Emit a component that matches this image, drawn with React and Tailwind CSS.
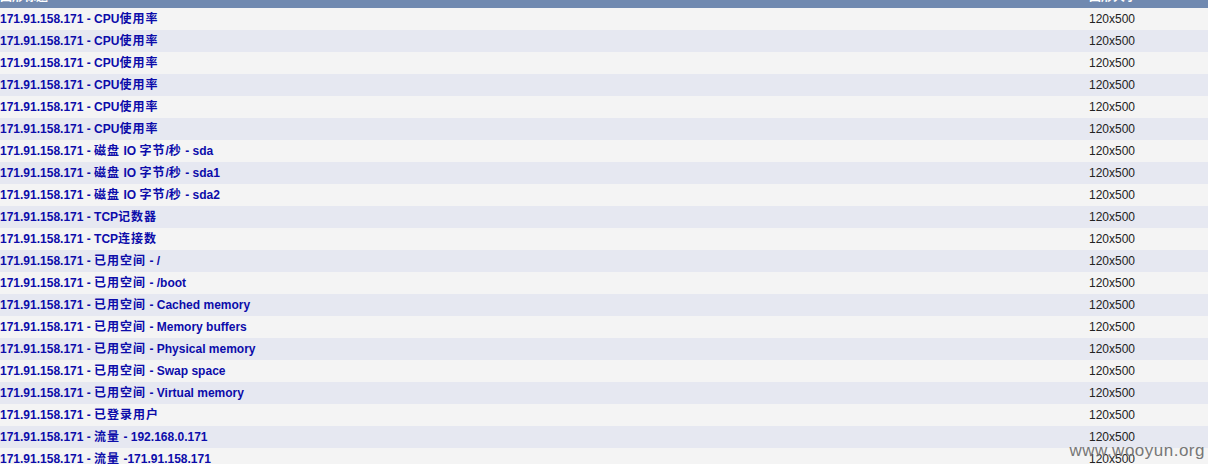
const HOST = "171.91.158.171";

const ROWS = [
  "CPU使用率",
  "CPU使用率",
  "CPU使用率",
  "CPU使用率",
  "CPU使用率",
  "CPU使用率",
  "磁盘 IO 字节/秒 - sda",
  "磁盘 IO 字节/秒 - sda1",
  "磁盘 IO 字节/秒 - sda2",
  "TCP记数器",
  "TCP连接数",
  "已用空间 - /",
  "已用空间 - /boot",
  "已用空间 - Cached memory",
  "已用空间 - Memory buffers",
  "已用空间 - Physical memory",
  "已用空间 - Swap space",
  "已用空间 - Virtual memory",
  "已登录用户",
  "流量 - 192.168.0.171",
  "流量 -171.91.158.171",
];

const FONT = {
  fontFamily: '"Liberation Sans", Arial, "Noto Sans CJK SC", sans-serif',
};

// CJK glyphs in the original render a touch wider than Noto's
function Label({ text }) {
  const parts = text.split(/([\u4e00-\u9fff]+)/);
  return parts.map((p, i) =>
    /[\u4e00-\u9fff]/.test(p) ? (
      <span key={i} className="tracking-[1px]">
        {p}
      </span>
    ) : (
      <span key={i}>{p}</span>
    )
  );
}

export default function App() {
  return (
    <div className="relative h-[464px] w-[1208px] overflow-hidden bg-white" style={FONT}>
      <div className="-mt-[14px] flex h-[22px] items-center bg-[#7089b0] text-[12px] font-bold text-white">
        <div className="flex-1">图形标题</div>
        <div className="w-[119px]">图形大小</div>
      </div>

      {ROWS.map((name, i) => (
        <div
          key={i}
          className={`flex h-[22px] items-center text-[12px] ${
            i % 2 === 0 ? "bg-[#f4f4f4]" : "bg-[#e6e8f1]"
          }`}
        >
          <div className="flex-1 font-bold text-[#0c0caa]">
            {HOST} - <Label text={name} />
          </div>
          <div className="w-[119px] text-[#222]">120x500</div>
        </div>
      ))}

      <div className="pointer-events-none absolute bottom-[1px] right-[3px] text-[17px] tracking-[0.5px] text-[#777]">
        www.wooyun.org
      </div>
    </div>
  );
}
